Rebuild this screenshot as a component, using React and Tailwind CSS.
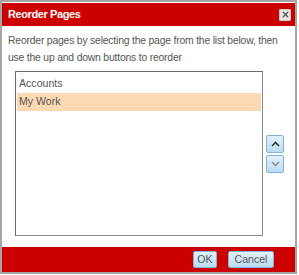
import { X } from 'lucide-react'

function SmallButton({ children, className = '' }) {
  return (
    <button
      className={`flex items-center justify-center border border-[#7db6d9] rounded-[2px] bg-gradient-to-b from-[#e3f1fa] to-[#b9dcf1] text-[#555] ${className}`}
    >
      {children}
    </button>
  )
}

export default function App() {
  const pages = ['Accounts', 'My Work']
  const selected = 'My Work'

  return (
    <div className="w-[299px] h-[275px] bg-white" style={{ fontFamily: '"Liberation Sans", Arial, sans-serif' }}>
      <div className="w-[297px] h-[274px] border-2 border-[#a6a6a6] flex flex-col">
        {/* Title bar */}
        <div className="h-[23px] mt-px bg-[#cc0000] flex items-center justify-between pl-[6px] pr-[4px]">
          <span className="text-white font-bold text-[11px] tracking-[-0.4px]">Reorder Pages</span>
          <button className="w-[12px] h-[12px] bg-[#e8e8e8] border border-[#c8c8c8] rounded-[1px] flex items-center justify-center">
            <X className="w-[9px] h-[9px] text-[#555]" strokeWidth={3.5} />
          </button>
        </div>

        {/* Body */}
        <div className="flex-1 flex flex-col px-[6px] pt-[6px]">
          <p className="text-[10.4px] tracking-[-0.2px] leading-[17px] text-[#555]">
            Reorder pages by selecting the page from the list below, then use the up and down buttons to reorder
          </p>
          <div className="flex items-center gap-[3px] mt-[5px] pl-[7px]">
            <div className="w-[248px] h-[165px] border border-[#8a8a8a] border-t-[#6d6d6d] border-l-[#6d6d6d] pt-[3px] px-px">
              {pages.map((p) => (
                <div
                  key={p}
                  className={`h-[18px] flex items-center pl-[2px] text-[10.6px] text-[#555] ${p === selected ? 'bg-[#fdd9b3]' : ''}`}
                >
                  {p}
                </div>
              ))}
            </div>
            <div className="flex flex-col gap-[2px]">
              <SmallButton className="w-[18px] h-[18px]">
                <svg width="9" height="6" viewBox="0 0 9 6">
                  <path d="M1 5 L4.5 1.5 L8 5" fill="none" stroke="#333" strokeWidth="1.6" />
                </svg>
              </SmallButton>
              <SmallButton className="w-[18px] h-[18px]">
                <svg width="9" height="6" viewBox="0 0 9 6">
                  <path d="M1 1 L4.5 4.5 L8 1" fill="none" stroke="#888" strokeWidth="1.4" />
                </svg>
              </SmallButton>
            </div>
          </div>
        </div>

        {/* Footer */}
        <div className="h-[25px] bg-[#cc0000] flex items-center justify-end gap-[11px] pr-[21px]">
          <SmallButton className="w-[24px] h-[17px] text-[10.6px]">OK</SmallButton>
          <SmallButton className="w-[46px] h-[17px] text-[10.6px]">Cancel</SmallButton>
        </div>
      </div>
    </div>
  )
}
